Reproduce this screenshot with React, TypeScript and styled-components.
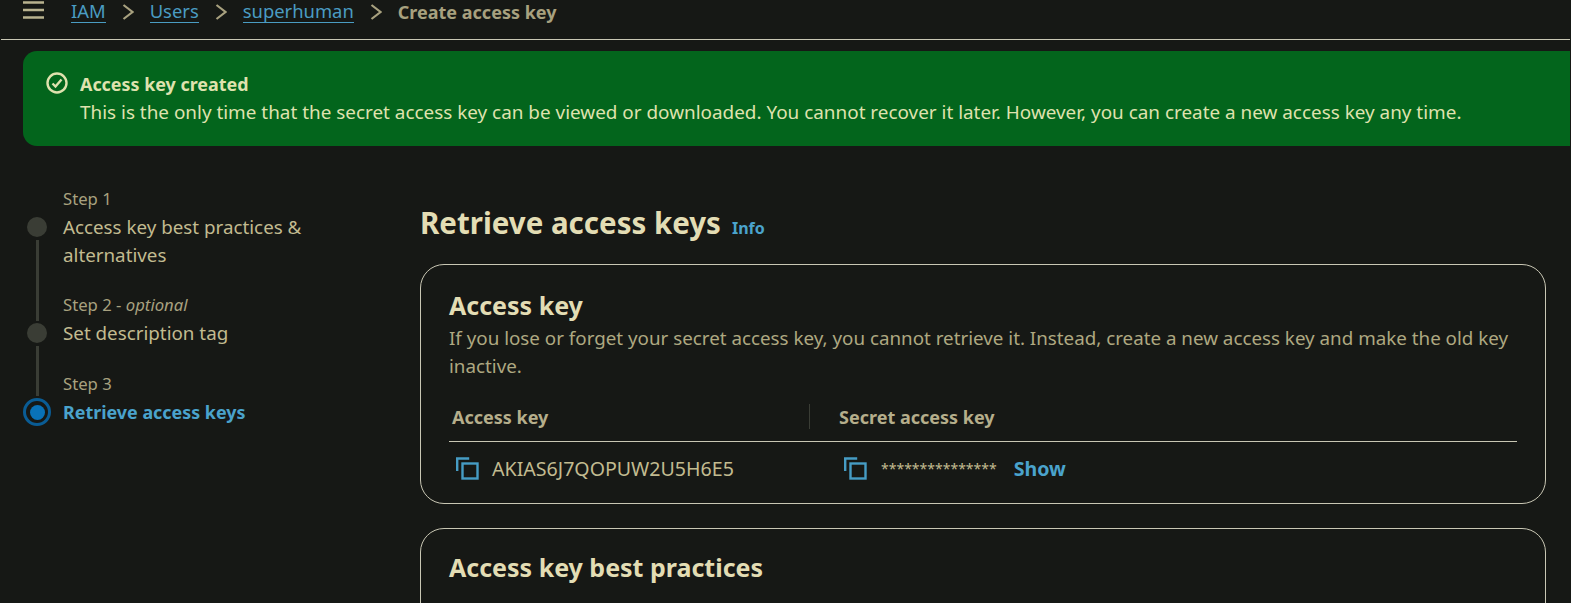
import React from 'react';
import styled, {createGlobalStyle} from 'styled-components';

const GlobalStyle = createGlobalStyle`
  html, body {
    margin: 0;
    padding: 0;
    background: #161815;
  }

  body {
    font-family: "Noto Sans", "Liberation Sans", sans-serif;
    color: #c9c29c;
  }
`

const Page = styled.div`
  width: 1571px;
  height: 603px;
  overflow: hidden;
  background: #161815;
`

const TopBar = styled.div`
  height: 39px;
  display: flex;
  align-items: flex-start;
  padding-left: 22px;
  border-bottom: 1px solid #c9c7b4;
  margin-right: 1px;
  margin-left: 1px;
`

const Burger = styled.svg`
  width: 21px;
  height: 20px;
  margin-right: 27px;
  color: #b9b28f;
`

const Crumbs = styled.nav`
  display: flex;
  align-items: center;
  font-size: 18.4px;
`

const CrumbLink = styled.a`
  color: #4a9cc2;
  line-height: 22px;
  border-bottom: 1px solid #4a9cc2;
`

const CrumbCurrent = styled.span`
  color: #a8a17f;
  font-weight: 700;
  font-size: 18px;
  line-height: 22px;
`

const Chevron = styled.svg`
  width: 12px;
  height: 18px;
  margin: 0 16px;
  color: #a8a17f;
`

const Banner = styled.div`
  margin: 11px 1px 0 23px;
  height: 95px;
  box-sizing: border-box;
  padding: 19px 22px;
  display: flex;
  gap: 11px;
  background: #03651c;
  border-radius: 14px 0 0 14px;
  color: #dfe2ae;
  font-size: 18.9px;
  line-height: 28px;
`

const BannerIcon = styled.svg`
  width: 24px;
  height: 24px;
  flex: none;
  margin-top: 1px;
`

const BannerTitle = styled.div`
  font-weight: 700;
  font-size: 17.9px;
`

const Content = styled.div`
  display: grid;
  grid-template-columns: 397px 1126px;
  padding-left: 23px;
`

const Steps = styled.div`
  padding-top: 42px;
`

const Step = styled.div`
  display: grid;
  grid-template-columns: 40px 1fr;
`

const Rail = styled.div`
  grid-row: 1 / 3;
  width: 28px;
  display: flex;
  flex-direction: column;
  align-items: center;
`

const RailTop = styled.div<{$height: number; $visible: boolean}>`
  width: 3px;
  height: ${p => p.$height}px;
  background: ${p => (p.$visible ? '#3a3d35' : 'transparent')};
  margin-bottom: 2px;
`

const RailRest = styled.div`
  width: 3px;
  flex: 1;
  margin-top: 3px;
  background: #3a3d35;
`

const Dot = styled.div`
  width: 20px;
  height: 20px;
  border-radius: 50%;
  background: #3a3d35;
`

const ActiveDot = styled.div`
  width: 28px;
  height: 28px;
  box-sizing: border-box;
  border-radius: 50%;
  border: 3px solid #0a5c94;
  display: flex;
  align-items: center;
  justify-content: center;

  &::after {
    content: "";
    width: 15px;
    height: 15px;
    border-radius: 50%;
    background: #0972b8;
  }
`

const StepLabel = styled.div`
  font-size: 16.7px;
  line-height: 22px;
  color: #a8a17f;
  margin-bottom: 3px;

  & > em {
    font-style: italic;
  }
`

const StepTitle = styled.div<{$active?: boolean; $pad: number}>`
  font-size: ${p => (p.$active ? '17.9px' : '18.8px')};
  line-height: ${p => (p.$active ? '25px' : '28px')};
  width: 270px;
  color: ${p => (p.$active ? '#4aa3cc' : '#c2bb90')};
  font-weight: ${p => (p.$active ? 700 : 400)};
  padding-bottom: ${p => p.$pad}px;
`

const Main = styled.div`
  padding-top: 52px;
`

const TitleRow = styled.div`
  display: flex;
  align-items: baseline;
  gap: 11px;
  height: 50px;
  margin-bottom: 16px;
`

const PageTitle = styled.h1`
  margin: 0;
  font-size: 29.5px;
  line-height: 50px;
  font-weight: 700;
  color: #e3ddb4;
`

const InfoLink = styled.a`
  font-size: 16px;
  font-weight: 700;
  color: #4aa3cc;
`

const Card = styled.section<{$height: number; $pad: number}>`
  box-sizing: border-box;
  height: ${p => p.$height}px;
  border: 1px solid #c9c7b4;
  border-radius: 24px;
  padding: ${p => p.$pad}px 28px 0;
  margin-bottom: 24px;
`

const CardTitle = styled.h2`
  margin: 0;
  font-size: 25px;
  line-height: 37px;
  font-weight: 700;
  color: #e3ddb4;
`

const CardText = styled.p`
  margin: 0;
  font-size: 18.8px;
  line-height: 28px;
  color: #aea881;
`

const KeyTable = styled.div`
  display: grid;
  grid-template-columns: 360px 1fr;
  margin-top: 17px;
`

const HeadCell = styled.div<{$divider?: boolean}>`
  height: 45px;
  display: flex;
  align-items: center;
  box-sizing: border-box;
  padding-bottom: 5px;
  padding-left: ${p => (p.$divider ? '30px' : '3px')};
  font-size: 18px;
  font-weight: 700;
  color: #b5ae8b;
  border-bottom: 1px solid #c9c7b4;
  position: relative;

  ${p => p.$divider && `
    &::before {
      content: "";
      position: absolute;
      left: 0;
      top: 7px;
      height: 25px;
      width: 1px;
      background: #3a3d35;
    }
  `}
`

const ValueCell = styled.div<{$second?: boolean}>`
  display: flex;
  align-items: center;
  height: 53px;
  padding-left: ${p => (p.$second ? '35px' : '7px')};
`

const CopyIcon = styled.svg`
  width: 23px;
  height: 23px;
  flex: none;
  margin-right: 14px;
  color: #469cc4;
`

const KeyText = styled.span`
  font-size: 19.6px;
  color: #c2bb90;
  margin-left: -1px;
`

const Mask = styled.span`
  font-size: 14px;
  color: #c2bb90;
  margin-right: 17px;
`

const ShowLink = styled.a`
  font-size: 19.6px;
  font-weight: 700;
  color: #4aa3cc;
`

const Copy = () => (
    <CopyIcon viewBox="0 0 23 23" fill="none" stroke="currentColor" strokeWidth="2.4">
        <path d="M1.2 14V1.5h12"/>
        <rect x="6.5" y="6.5" width="15" height="15"/>
    </CopyIcon>
)

const Arrow = () => (
    <Chevron viewBox="0 0 12 18" fill="none" stroke="currentColor" strokeWidth="2.2">
        <path d="M1.5 2l9 7-9 7"/>
    </Chevron>
)

export default function App() {
    return (
        <Page>
            <GlobalStyle/>
            <TopBar>
                <Burger viewBox="0 0 21 20" fill="none" stroke="currentColor" strokeWidth="2.6">
                    <path d="M0 2.5h21M0 10h21M0 17.5h21"/>
                </Burger>
                <Crumbs>
                    <CrumbLink>IAM</CrumbLink>
                    <Arrow/>
                    <CrumbLink>Users</CrumbLink>
                    <Arrow/>
                    <CrumbLink>superhuman</CrumbLink>
                    <Arrow/>
                    <CrumbCurrent>Create access key</CrumbCurrent>
                </Crumbs>
            </TopBar>

            <Banner>
                <BannerIcon viewBox="0 0 24 24" fill="none" stroke="currentColor" strokeWidth="2.4">
                    <circle cx="12" cy="12" r="9.5"/>
                    <path d="M7.5 12.5l3 3 6-7"/>
                </BannerIcon>
                <div>
                    <BannerTitle>Access key created</BannerTitle>
                    <div>This is the only time that the secret access key can be viewed or downloaded. You cannot recover it later. However, you can create a new access key any time.</div>
                </div>
            </Banner>

            <Content>
                <Steps>
                    <Step>
                        <Rail>
                            <RailTop $height={27} $visible={false}/>
                            <Dot/>
                            <RailRest/>
                        </Rail>
                        <StepLabel>Step 1</StepLabel>
                        <StepTitle $pad={25}>Access key best practices &amp; alternatives</StepTitle>
                    </Step>
                    <Step>
                        <Rail>
                            <RailTop $height={27} $visible/>
                            <Dot/>
                            <RailRest/>
                        </Rail>
                        <StepLabel>Step 2 - <em>optional</em></StepLabel>
                        <StepTitle $pad={26}>Set description tag</StepTitle>
                    </Step>
                    <Step>
                        <Rail>
                            <RailTop $height={23} $visible/>
                            <ActiveDot/>
                        </Rail>
                        <StepLabel>Step 3</StepLabel>
                        <StepTitle $active $pad={0}>Retrieve access keys</StepTitle>
                    </Step>
                </Steps>

                <Main>
                    <TitleRow>
                        <PageTitle>Retrieve access keys</PageTitle>
                        <InfoLink>Info</InfoLink>
                    </TitleRow>

                    <Card $height={240} $pad={22}>
                        <CardTitle>Access key</CardTitle>
                        <CardText>If you lose or forget your secret access key, you cannot retrieve it. Instead, create a new access key and make the old key inactive.</CardText>
                        <KeyTable>
                            <HeadCell>Access key</HeadCell>
                            <HeadCell $divider>Secret access key</HeadCell>
                            <ValueCell>
                                <Copy/>
                                <KeyText>AKIAS6J7QOPUW2U5H6E5</KeyText>
                            </ValueCell>
                            <ValueCell $second>
                                <Copy/>
                                <Mask>***************</Mask>
                                <ShowLink>Show</ShowLink>
                            </ValueCell>
                        </KeyTable>
                    </Card>

                    <Card $height={200} $pad={20}>
                        <CardTitle>Access key best practices</CardTitle>
                    </Card>
                </Main>
            </Content>
        </Page>
    );
}
